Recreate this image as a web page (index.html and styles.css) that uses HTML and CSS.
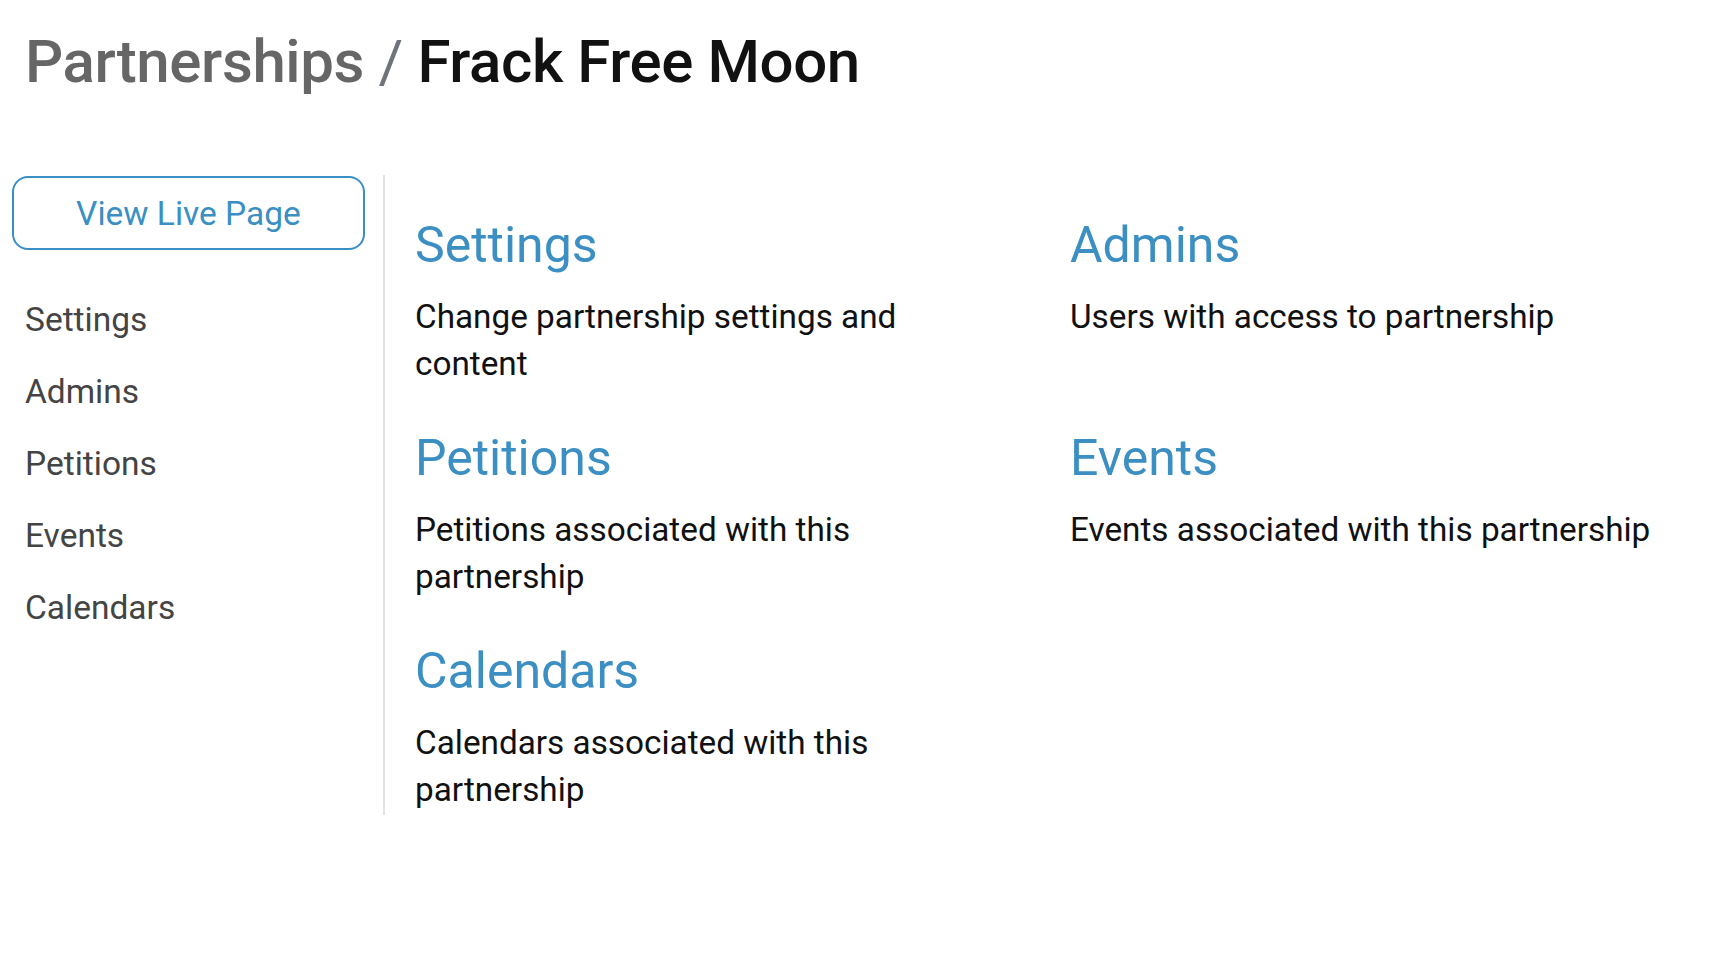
FILE: index.html
```html
<!DOCTYPE html>
<html lang="en">
<head>
    <meta charset="UTF-8">
    <title>Partnerships / Frack Free Moon</title>
    <link rel="stylesheet" href="styles.css">
</head>
<body>
<h1 class="page-title">
    <span class="crumb">Partnerships</span>
    <span class="sep">/</span>
    <span class="current">Frack Free Moon</span>
</h1>
<div class="layout">
    <div class="sidebar">
        <a class="live-btn" href="#">View Live Page</a>
        <ul class="side-nav">
            <li><a href="#">Settings</a></li>
            <li><a href="#">Admins</a></li>
            <li><a href="#">Petitions</a></li>
            <li><a href="#">Events</a></li>
            <li><a href="#">Calendars</a></li>
        </ul>
    </div>
    <div class="content">
        <div class="tile">
            <a class="tile-title" href="#">Settings</a>
            <p class="tile-text">Change partnership settings and content</p>
        </div>
        <div class="tile">
            <a class="tile-title" href="#">Admins</a>
            <p class="tile-text">Users with access to partnership</p>
        </div>
        <div class="tile">
            <a class="tile-title" href="#">Petitions</a>
            <p class="tile-text">Petitions associated with this partnership</p>
        </div>
        <div class="tile">
            <a class="tile-title" href="#">Events</a>
            <p class="tile-text">Events associated with this partnership</p>
        </div>
        <div class="tile">
            <a class="tile-title" href="#">Calendars</a>
            <p class="tile-text">Calendars associated with this partnership</p>
        </div>
    </div>
</div>
</body>
</html>
```

FILE: styles.css
```css
body {
    margin: 0;
    font-family: Roboto, "Liberation Sans", sans-serif;
    background-color: #ffffff;
    color: #111111;
}
a {
    text-decoration: none;
}
.page-title {
    margin: 0;
    padding: 28px 0 0 25px;
    height: 175px;
    box-sizing: border-box;
    font-size: 60px;
    line-height: 68px;
    font-weight: 500;
    letter-spacing: -0.4px;
}
.crumb {
    color: #666666;
}
.sep {
    color: #6e747b;
    font-weight: 400;
}
.current {
    color: #111111;
}
.layout {
    display: flex;
    align-items: flex-start;
}
.sidebar {
    width: 371px;
    padding: 1px 0 0 12px;
    border-right: 2px solid #e2e2e2;
    min-height: 639px;
}
.live-btn {
    display: block;
    width: 353px;
    height: 74px;
    box-sizing: border-box;
    border: 2px solid #3b8fc3;
    border-radius: 16px;
    color: #3b8fc3;
    font-size: 33.5px;
    line-height: 72px;
    text-align: center;
}
.side-nav {
    list-style: none;
    margin: 34px 0 0 0;
    padding: 0 0 0 13px;
}
.side-nav li {
    height: 72px;
    font-size: 33.5px;
    line-height: 72px;
}
.side-nav a {
    color: #444444;
}
.content {
    flex: 1;
    display: grid;
    grid-template-columns: 597px 597px;
    column-gap: 58px;
    row-gap: 43px;
    padding: 42px 0 0 30px;
}
.tile-title {
    display: block;
    color: #3b8fc3;
    font-size: 50px;
    line-height: 56px;
}
.tile-text {
    margin: 20px 0 0 0;
    font-size: 33.3px;
    line-height: 47px;
    color: #111111;
}
```
